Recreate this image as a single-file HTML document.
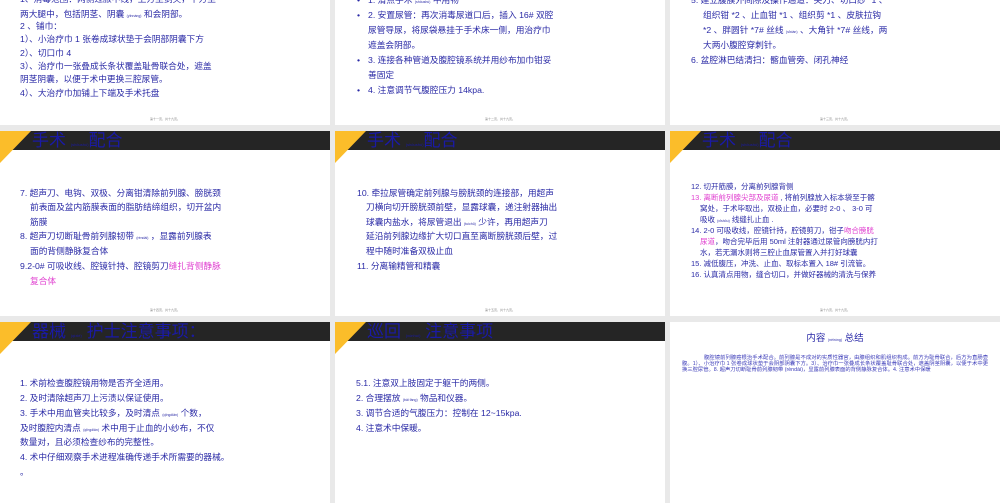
<!DOCTYPE html>
<html><head><meta charset="utf-8"><style>
*{margin:0;padding:0;box-sizing:border-box}
body{width:1000px;height:503px;background:#e9e9e9;position:relative;overflow:hidden;font-family:"Liberation Sans","Noto Sans CJK SC",sans-serif;color:#2a2aa8}
.s{position:absolute;background:#fff;overflow:hidden}
.t{position:absolute;font-size:8.7px;white-space:nowrap;line-height:10px;font-weight:normal;color:#2a2aa6}
.p{font-size:3.5px;font-weight:normal}
.m{color:#e040d0}
.bar{position:absolute;left:0;top:0;width:330px;height:19px;background:#252525}
.tri{position:absolute;left:0;top:0}
.h{position:absolute;left:32px;top:0;font-size:17px;line-height:19px;color:#1a1aa6;white-space:nowrap}
.h .p{font-size:4px}
.f{position:absolute;bottom:4px;left:0;width:100%;text-align:center;font-size:3px;color:#888}
</style></head><body>

<!-- Row 1 -->
<div class="s" style="left:0;top:0;width:330px;height:125px">
<div class="t" style="left:20px;top:-6px">1、消毒范围：两侧过腋中线，上方至剑突，下方至</div>
<div class="t" style="left:20px;top:9px">两大腿中，包括阴茎、阴囊 <span class="p">(yīnnáng)</span> 和会阴部。</div>
<div class="t" style="left:20px;top:21px">2 、铺巾：</div>
<div class="t" style="left:20px;top:34px">1）、小治疗巾 1 张卷成球状垫于会阴部阴囊下方</div>
<div class="t" style="left:20px;top:48px">2）、切口巾 4</div>
<div class="t" style="left:20px;top:61px">3）、治疗巾一张叠成长条状覆盖耻骨联合处，遮盖</div>
<div class="t" style="left:20px;top:74px">阴茎阴囊，以便于术中更换三腔尿管。</div>
<div class="t" style="left:20px;top:88px">4）、大治疗巾加铺上下端及手术托盘</div>
<div class="f">第十一页，共十九页。</div>
</div>
<div class="s" style="left:335px;top:0;width:330px;height:125px">
<div class="t" style="left:22px;top:-5px">•</div><div class="t" style="left:33px;top:-5px">1. 清点手术 <span class="p">(shǒushù)</span> 中用物</div>
<div class="t" style="left:22px;top:10px">•</div><div class="t" style="left:33px;top:10px">2. 安置尿管：再次消毒尿道口后，插入 16# 双腔</div>
<div class="t" style="left:33px;top:25px">尿管导尿，将尿袋悬挂于手术床一侧，用治疗巾</div>
<div class="t" style="left:33px;top:40px">遮盖会阴部。</div>
<div class="t" style="left:22px;top:55px">•</div><div class="t" style="left:33px;top:55px">3. 连接各种管道及腹腔镜系统并用纱布加巾钳妥</div>
<div class="t" style="left:33px;top:70px">善固定</div>
<div class="t" style="left:22px;top:85px">•</div><div class="t" style="left:33px;top:85px">4. 注意调节气腹腔压力 14kpa.</div>
<div class="f">第十二页，共十九页。</div>
</div>
<div class="s" style="left:670px;top:0;width:330px;height:125px">
<div class="t" style="left:21px;top:-5px">5. 建立腹膜外间隙及操作通道：尖刀、切口纱 *1 、</div>
<div class="t" style="left:33px;top:10px">组织钳 *2 、止血钳 *1 、组织剪 *1 、皮肤拉钩</div>
<div class="t" style="left:33px;top:25px">*2 、胖圆针 *7# 丝线 <span class="p">(sīxiàn)</span> 、大角针 *7# 丝线，两</div>
<div class="t" style="left:33px;top:40px">大两小腹腔穿刺针。</div>
<div class="t" style="left:21px;top:55px">6. 盆腔淋巴结清扫：髂血管旁、闭孔神经</div>
<div class="f">第十三页，共十九页。</div>
</div>

<!-- Row 2 -->
<div class="s" style="left:0;top:131px;width:330px;height:185px">
<div class="bar"></div><svg class="tri" width="40" height="34"><polygon points="0,0 31,0 0,32" fill="#fbbd2a"/></svg>
<div class="h">手术 <span class="p">(shǒushù)</span>配合</div>
<div class="t" style="left:20px;top:57px">7. 超声刀、电钩、双极、分离钳清除前列腺、膀胱颈</div>
<div class="t" style="left:30px;top:71px">前表面及盆内筋膜表面的脂肪结缔组织，切开盆内</div>
<div class="t" style="left:30px;top:86px">筋膜</div>
<div class="t" style="left:20px;top:100px">8. 超声刀切断耻骨前列腺韧带 <span class="p">(rèndài)</span> ，显露前列腺表</div>
<div class="t" style="left:30px;top:115px">面的背侧静脉复合体</div>
<div class="t" style="left:20px;top:130px">9.2-0# 可吸收线、腔镜针持、腔镜剪刀<span class="m">缝扎背侧静脉</span></div>
<div class="t m" style="left:30px;top:145px">复合体</div>
<div class="f">第十四页，共十九页。</div>
</div>
<div class="s" style="left:335px;top:131px;width:330px;height:185px">
<div class="bar"></div><svg class="tri" width="40" height="34"><polygon points="0,0 31,0 0,32" fill="#fbbd2a"/></svg>
<div class="h">手术 <span class="p">(shǒushù)</span>配合</div>
<div class="t" style="left:22px;top:57px">10. 牵拉尿管确定前列腺与膀胱颈的连接部，用超声</div>
<div class="t" style="left:31px;top:71px">刀横向切开膀胱颈前壁，显露球囊，递注射器抽出</div>
<div class="t" style="left:31px;top:86px">球囊内盐水，将尿管退出 <span class="p">(tuìchū)</span> 少许，再用超声刀</div>
<div class="t" style="left:31px;top:100px">延沿前列腺边缘扩大切口直至离断膀胱颈后壁，过</div>
<div class="t" style="left:31px;top:115px">程中随时准备双极止血</div>
<div class="t" style="left:22px;top:130px">11. 分离输精管和精囊</div>
<div class="f">第十五页，共十九页。</div>
</div>
<div class="s" style="left:670px;top:131px;width:330px;height:185px">
<div class="bar"></div><svg class="tri" width="40" height="34"><polygon points="0,0 31,0 0,32" fill="#fbbd2a"/></svg>
<div class="h">手术 <span class="p">(shǒushù)</span>配合</div>
<div class="t" style="left:21px;top:51px;font-size:7.5px">12. 切开筋膜，分离前列腺背侧</div>
<div class="t" style="left:21px;top:62px;font-size:7.5px"><span class="m">13. 离断前列腺尖部及尿道</span> , 将前列腺放入标本袋至于髂</div>
<div class="t" style="left:30px;top:73px;font-size:7.5px">窝处，于术毕取出，双极止血，必要时 2-0 、 3-0 可</div>
<div class="t" style="left:30px;top:84px;font-size:7.5px">吸收 <span class="p">(xīshōu)</span> 线缝扎止血 .</div>
<div class="t" style="left:21px;top:95px;font-size:7.5px">14. 2-0 可吸收线，腔镜针持，腔镜剪刀，钳子<span class="m">吻合膀胱</span></div>
<div class="t" style="left:30px;top:106px;font-size:7.5px"><span class="m">尿道</span>，吻合完毕后用 50ml 注射器通过尿管向膀胱内打</div>
<div class="t" style="left:30px;top:117px;font-size:7.5px">水，若无漏水则将三腔止血尿管置入并打好球囊</div>
<div class="t" style="left:21px;top:128px;font-size:7.5px">15. 减低腹压，冲洗、止血、取标本置入 18# 引流管。</div>
<div class="t" style="left:21px;top:139px;font-size:7.5px">16. 认真清点用物，缝合切口，并做好器械的清洗与保养</div>
<div class="f">第十六页，共十九页。</div>
</div>

<!-- Row 3 -->
<div class="s" style="left:0;top:322px;width:330px;height:181px">
<div class="bar"></div><svg class="tri" width="40" height="34"><polygon points="0,0 31,0 0,32" fill="#fbbd2a"/></svg>
<div class="h">器械 <span class="p">(qìxiè)</span> 护士注意事项：</div>
<div class="t" style="left:20px;top:56px">1. 术前检查腹腔镜用物是否齐全适用。</div>
<div class="t" style="left:20px;top:71px">2. 及时清除超声刀上污渍以保证使用。</div>
<div class="t" style="left:20px;top:86px">3. 手术中用血管夹比较多，及时清点 <span class="p">(qīngdiǎn)</span> 个数，</div>
<div class="t" style="left:20px;top:101px">及时腹腔内清点 <span class="p">(qīngdiǎn)</span> 术中用于止血的小纱布，不仅</div>
<div class="t" style="left:20px;top:115px">数量对，且必须检查纱布的完整性。</div>
<div class="t" style="left:20px;top:130px">4. 术中仔细观察手术进程准确传递手术所需要的器械。</div>
<div class="t" style="left:20px;top:145px">。</div>
</div>
<div class="s" style="left:335px;top:322px;width:330px;height:181px">
<div class="bar"></div><svg class="tri" width="40" height="34"><polygon points="0,0 31,0 0,32" fill="#fbbd2a"/></svg>
<div class="h">巡回 <span class="p">(xúnhuí)</span> 注意事项</div>
<div class="t" style="left:21px;top:56px">5.1. 注意双上肢固定于躯干的两侧。</div>
<div class="t" style="left:21px;top:71px">2. 合理摆放 <span class="p">(bǎi fàng)</span> 物品和仪器。</div>
<div class="t" style="left:21px;top:86px">3. 调节合适的气腹压力：控制在 12~15kpa.</div>
<div class="t" style="left:21px;top:101px">4. 注意术中保暖。</div>
</div>
<div class="s" style="left:670px;top:322px;width:330px;height:181px">
<div style="position:absolute;left:0;width:330px;top:8px;text-align:center;font-size:9.5px;color:#2a2aa8">内容 <span style="font-size:3.5px">(nèiróng)</span> 总结</div>
<div style="position:absolute;left:12px;top:33px;width:306px;font-size:5.3px;line-height:6px;color:#3a3ab8;text-indent:22px;text-align:justify">腹腔镜前列腺癌根治手术配合。前列腺是不成对的实质性器官，由腺组织和肌组织构成。前方为耻骨联合，后方为直肠壶腹。1）、小治疗巾 1 张卷成球状垫于会阴部阴囊下方。3）、治疗巾一张叠成长条状覆盖耻骨联合处，遮盖阴茎阴囊，以便于术中更换三腔尿管。8. 超声刀切断耻骨前列腺韧带 (rèndài)，显露前列腺表面的背侧静脉复合体。4. 注意术中保暖</div>
</div>
</body></html>
